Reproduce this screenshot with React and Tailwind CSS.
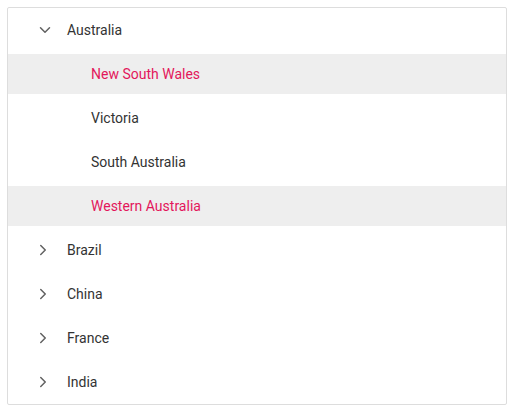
import { ChevronDown, ChevronRight } from "lucide-react";

const children = [
  { name: "New South Wales", selected: true },
  { name: "Victoria" },
  { name: "South Australia" },
  { name: "Western Australia", selected: true },
];

const others = ["Brazil", "China", "France", "India"];

const Row = ({ children: content, selected }) => (
  <li className="py-[2px]">
    <div className={`h-10 flex items-center ${selected ? "bg-[#eeeeee]" : ""}`}>{content}</div>
  </li>
);

const App = () => {
  return (
    <div className="p-[7px] font-['Roboto',sans-serif] text-[14px]">
      <ul className="w-[500px] border border-[#dddddd] rounded-[2px] bg-white">
        <Row>
          <ChevronDown className="ml-[28px] w-[18px] h-[18px] text-[#616161]" strokeWidth={2} />
          <span className="ml-[13px] text-[#333333]">Australia</span>
        </Row>
        {children.map((c) => (
          <Row key={c.name} selected={c.selected}>
            <span className={`ml-[83px] ${c.selected ? "text-[#e3165b]" : "text-[#333333]"}`}>{c.name}</span>
          </Row>
        ))}
        {others.map((name) => (
          <Row key={name}>
            <ChevronRight className="ml-[26px] w-[18px] h-[18px] text-[#616161]" strokeWidth={2} />
            <span className="ml-[15px] text-[#333333]">{name}</span>
          </Row>
        ))}
      </ul>
    </div>
  );
};

export default App;
